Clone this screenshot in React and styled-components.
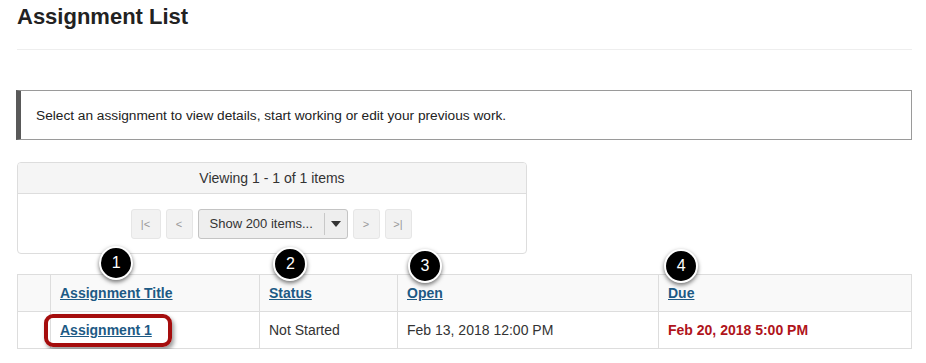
import React from "react";
import styled, { createGlobalStyle } from "styled-components";

const GlobalStyle = createGlobalStyle`
  body {
    margin: 0;
    background: #fff;
    font-family: "Liberation Sans", Arial, sans-serif;
    color: #333;
  }
`;

const Page = styled.div`
  padding: 5px 14px 0 17px;
`;

const Title = styled.h1`
  margin: 0;
  font-size: 22px;
  line-height: 24px;
  font-weight: bold;
  color: #222;
`;

const Rule = styled.hr`
  margin: 20px 0 40px;
  border: none;
  border-top: 1px solid #eee;
`;

const Notice = styled.div`
  display: flex;
  align-items: center;
  height: 48px;
  margin-left: -1px;
  padding-left: 15px;
  border: 1px solid #9a9a9a;
  border-left: 5px solid #595959;
  font-size: 13.7px;
  color: #222;
`;

const Pager = styled.div`
  width: 508px;
  margin-top: 22px;
  border: 1px solid #ddd;
  border-radius: 4px;
  overflow: hidden;
`;

const PagerHead = styled.div`
  height: 30px;
  display: flex;
  align-items: center;
  justify-content: center;
  background: #f5f5f5;
  border-bottom: 1px solid #ddd;
  font-size: 14px;
  color: #333;
`;

const PagerBody = styled.div`
  height: 59px;
  display: flex;
  align-items: center;
  justify-content: center;
  gap: 5px;
  padding-right: 2px;
`;

const NavButton = styled.span`
  display: flex;
  align-items: center;
  justify-content: center;
  width: ${(props) => props.width || "27px"};
  height: 30px;
  box-sizing: border-box;
  background: #f2f2f2;
  border: 1px solid #e6e6e6;
  border-radius: 3px;
  font-size: 11px;
  color: #999;
`;

const Select = styled.span`
  display: flex;
  align-items: center;
  width: 150px;
  height: 30px;
  box-sizing: border-box;
  background: #eee;
  border: 1px solid #c4c4c4;
  border-radius: 3px;
  font-size: 13px;
  color: #333;
`;

const SelectLabel = styled.span`
  flex: 1;
  padding-left: 11px;
`;

const Caret = styled.span`
  display: flex;
  align-items: center;
  justify-content: center;
  width: 22px;
  height: 22px;
  border-left: 1px solid #c8c8c8;
  &::after {
    content: "";
    border-left: 5px solid transparent;
    border-right: 5px solid transparent;
    border-top: 6px solid #333;
  }
`;

const Table = styled.table`
  width: 100%;
  margin-top: 20px;
  border-collapse: collapse;
  font-size: 14px;
`;

const Th = styled.th`
  width: ${(props) => props.width || "auto"};
  height: 36px;
  padding: 0 9px;
  text-align: left;
  background: #f9f9f9;
  border: 1px solid #ddd;
`;

const Td = styled.td`
  height: 36px;
  padding: 0 9px;
  border: 1px solid #ddd;
  color: ${(props) => (props.late ? "#b0141b" : "#333")};
  font-weight: ${(props) => (props.late ? "bold" : "normal")};
`;

const Link = styled.a`
  position: relative;
  display: inline-block;
  line-height: 18px;
  font-weight: bold;
  color: #1d5a85;
  text-decoration: underline;
`;

const Badge = styled.span`
  position: absolute;
  left: 50%;
  bottom: calc(100% + ${(props) => props.lift || 2}px);
  transform: translateX(-50%);
  width: 30px;
  height: 30px;
  display: flex;
  align-items: center;
  justify-content: center;
  background: #000;
  border: 2px solid #fff;
  border-radius: 50%;
  box-shadow: 0 2px 4px rgba(0, 0, 0, 0.55);
  color: #fff;
  font-size: 16px;
  font-weight: normal;
  text-decoration: none;
`;

const Highlight = styled.span`
  position: absolute;
  left: -16px;
  right: -20px;
  top: -7px;
  bottom: -8px;
  border: 4px solid #a50d0d;
  border-radius: 9px;
  box-shadow: 2px 3px 4px rgba(0, 0, 0, 0.4);
`;

const headers = [
  { label: "Assignment Title", n: 1, width: "190px", lift: 4 },
  { label: "Status", n: 2, width: "119px", lift: 3 },
  { label: "Open", n: 3, width: "242px", lift: 1 },
  { label: "Due", n: 4, lift: 1 },
];

export default function App() {
  return (
    <Page>
      <GlobalStyle />
      <Title>Assignment List</Title>
      <Rule />
      <Notice>
        Select an assignment to view details, start working or edit your previous work.
      </Notice>
      <Pager>
        <PagerHead>Viewing 1 - 1 of 1 items</PagerHead>
        <PagerBody>
          <NavButton width="30px">|&lt;</NavButton>
          <NavButton>&lt;</NavButton>
          <Select>
            <SelectLabel>Show 200 items...</SelectLabel>
            <Caret />
          </Select>
          <NavButton>&gt;</NavButton>
          <NavButton>&gt;|</NavButton>
        </PagerBody>
      </Pager>
      <Table>
        <thead>
          <tr>
            <Th width="14px" />
            {headers.map((h) => (
              <Th key={h.label} width={h.width}>
                <Link>
                  {h.label}
                  <Badge lift={h.lift}>{h.n}</Badge>
                </Link>
              </Th>
            ))}
          </tr>
        </thead>
        <tbody>
          <tr>
            <Td />
            <Td>
              <Link>
                Assignment 1
                <Highlight />
              </Link>
            </Td>
            <Td>Not Started</Td>
            <Td>Feb 13, 2018 12:00 PM</Td>
            <Td late>Feb 20, 2018 5:00 PM</Td>
          </tr>
        </tbody>
      </Table>
    </Page>
  );
}
